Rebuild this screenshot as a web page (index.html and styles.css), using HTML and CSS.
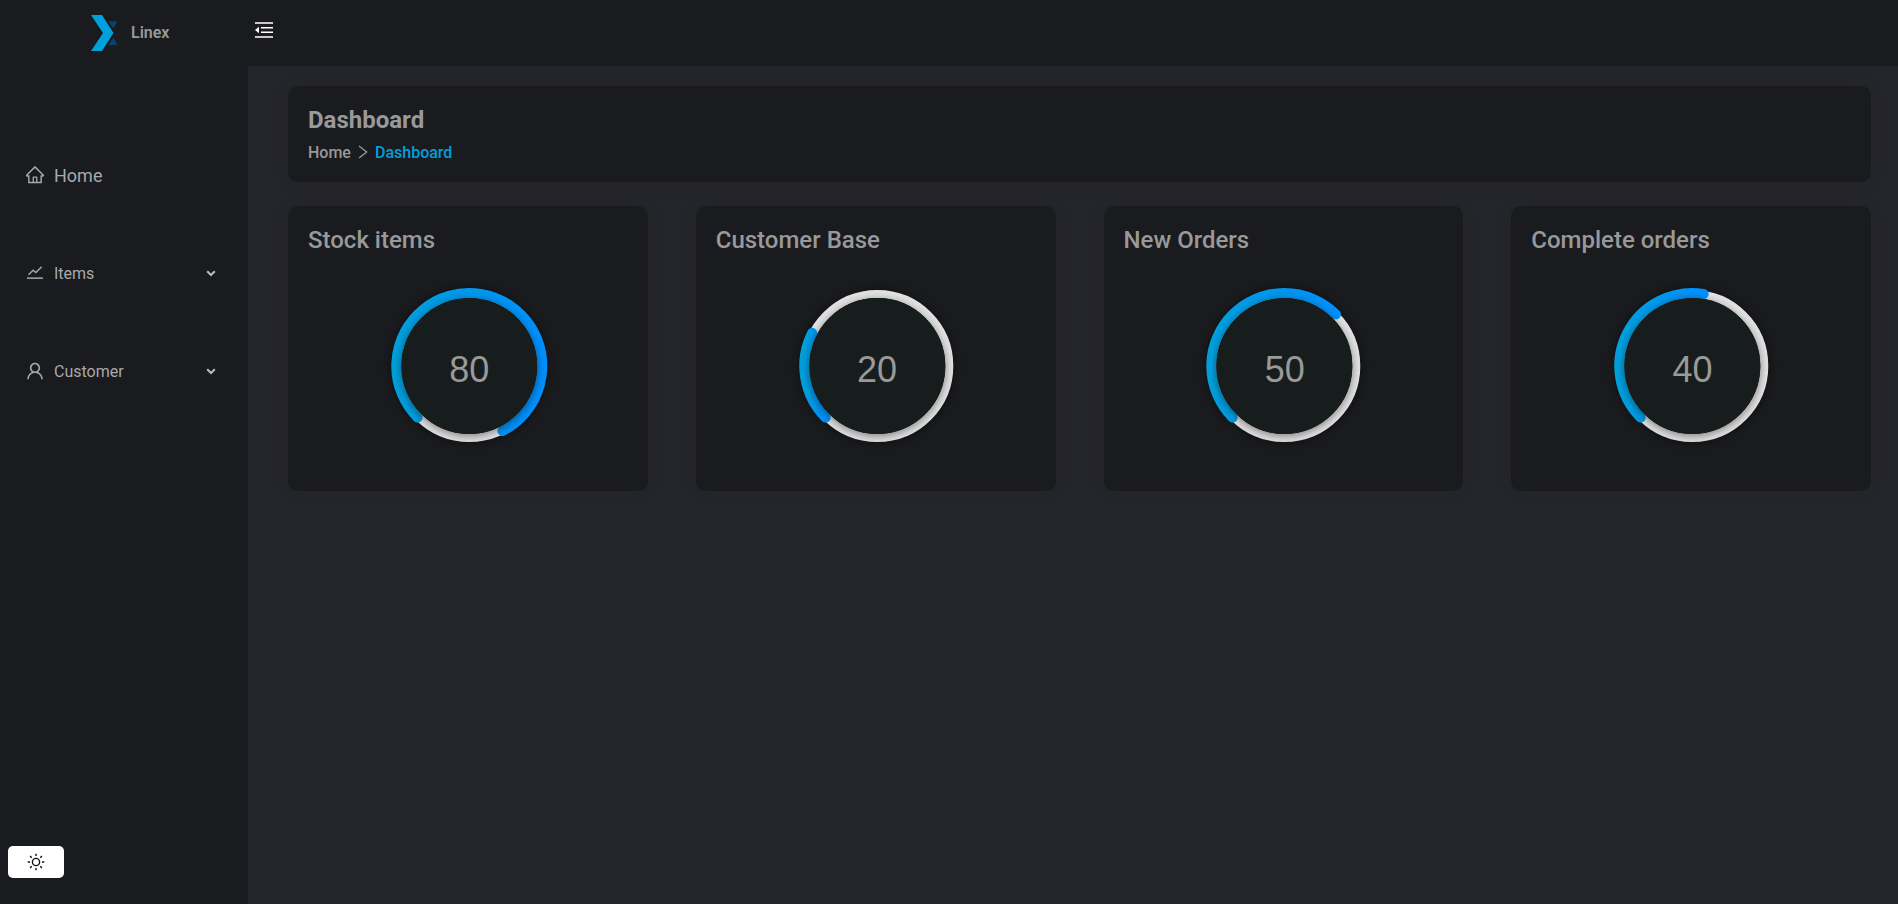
FILE: index.html
```html
<!DOCTYPE html>
<html lang="en">
<head>
<meta charset="utf-8">
<title>Linex</title>
<link rel="stylesheet" href="styles.css">
</head>
<body>
<div class="app">
  <aside class="sidebar">
    <div class="brand">
      <svg width="28" height="36" viewBox="0 0 28 36"><path d="M17 6.200h9.500l-4 7.500zM17 30h9.500l-4-7.500z" fill="#0b426b"/><path d="M0 0H11L22.500 18L11 36H0L12 18z" fill="#00a0dc"/></svg>
      <span>Linex</span>
    </div>
    <nav class="nav">
      <a class="item home">
        <svg class="icon" viewBox="60 75 904 904"><path d="M946.500 505L560.100 118.800l-25.900-25.900a31.500 31.500 0 0 0-44.400 0L77.500 505a63.900 63.900 0 0 0-18.800 46c.4 35.200 29.700 63.300 64.900 63.300h42.500V940h691.800V614.300h43.400c17.100 0 33.200-6.700 45.300-18.800a63.600 63.600 0 0 0 18.700-45.300c0-17-6.700-33.100-18.800-45.200zM568 868H456V664h112v204zm217.900-325.700V868H632V640c0-22.100-17.900-40-40-40H432c-22.100 0-40 17.900-40 40v228H238.100V542.300h-96l370-369.700 23.100 23.100L882 542.300h-96.100z"/></svg>
        <span>Home</span>
      </a>
      <a class="item">
        <svg class="icon" viewBox="0 0 18 18"><path d="M2.500 10.800L7.200 6.200L9.900 8.600L15.700 2.700" fill="none" stroke="currentColor" stroke-width="1.400"/><path d="M1 13.400H17V14.900H1z"/></svg>
        <span>Items</span>
        <svg class="caret" width="10" height="7" viewBox="0 0 10 7"><path d="M1.200 1.200L5 5L8.800 1.200"/></svg>
      </a>
      <a class="item">
        <svg class="icon" viewBox="76 76 872 872"><path d="M858.500 763.600a374 374 0 0 0-80.600-119.500 375.630 375.630 0 0 0-119.500-80.600c-.4-.2-.8-.3-1.200-.5C719.500 518 760 444.700 760 362c0-137-111-248-248-248S264 225 264 362c0 82.700 40.500 156 102.800 201.100-.4.200-.8.300-1.200.5-44.800 18.900-85 46-119.500 80.600a375.630 375.630 0 0 0-80.600 119.500A371.700 371.700 0 0 0 136 901.800a8 8 0 0 0 8 8.200h60c4.400 0 7.900-3.500 8-7.800 2-77.200 33-149.500 87.800-204.300 56.700-56.700 132-87.900 212.200-87.900s155.500 31.200 212.200 87.900C779 752.700 810 825 812 902.200c.1 4.400 3.600 7.800 8 7.800h60a8 8 0 0 0 8-8.200c-1-47.800-10.900-94.300-29.500-138.200zM512 534c-45.900 0-89.100-17.900-121.600-50.400S340 407.900 340 362c0-45.900 17.900-89.100 50.400-121.600S466.100 190 512 190s89.100 17.900 121.600 50.400S684 316.100 684 362c0 45.900-17.900 89.100-50.400 121.600S557.900 534 512 534z"/></svg>
        <span>Customer</span>
        <svg class="caret" width="10" height="7" viewBox="0 0 10 7"><path d="M1.200 1.200L5 5L8.800 1.200"/></svg>
      </a>
    </nav>
    <button class="theme">
      <svg width="18" height="18" viewBox="0 0 18 18" fill="none" stroke="#111" stroke-width="1.400"><circle cx="9" cy="9" r="3.600"/><path d="M9 .8V3M9 15V17.200M.8 9H3M15 9H17.200M3.100 3.100L4.700 4.700M13.300 13.300L14.900 14.900M3.100 14.900L4.700 13.300M13.300 4.700L14.900 3.100"/></svg>
    </button>
  </aside>
  <header class="topbar">
    <svg width="18" height="16" viewBox="0 0 18 16"><path d="M0 0H18V2H0zM0 14H18V16H0z" fill="#c8c8c9"/><path d="M6 5H18V6.500H6zM6 9.500H18V11H6z" fill="#fff"/><path d="M0 8L4 4.800V11.200z" fill="#fff"/></svg>
  </header>
  <main class="content">
    <section class="panel banner">
      <h1>Dashboard</h1>
      <div class="crumbs"><span>Home</span><svg width="10" height="14" viewBox="0 0 10 14"><path d="M1 1L8.700 7L1 13" fill="none" stroke="currentColor" stroke-width="1.300"/></svg><span class="current">Dashboard</span></div>
    </section>
    <section class="cards">
      <article class="panel card"><h2>Stock items</h2>
        <div class="dial"><svg viewBox="-80 -80 160 160"><circle class="track" r="72"/><path class="arc" d="M-51.620 51.620A73 73 0 1 1 33.140 65.040"/></svg><div class="face">80</div></div></article>
      <article class="panel card"><h2>Customer Base</h2>
        <div class="dial"><svg viewBox="-80 -80 160 160"><circle class="track" r="72"/><path class="arc" d="M-51.620 51.620A73 73 0 0 1 -65.040 -33.140"/></svg><div class="face">20</div></div></article>
      <article class="panel card"><h2>New Orders</h2>
        <div class="dial"><svg viewBox="-80 -80 160 160"><circle class="track" r="72"/><path class="arc" d="M-51.620 51.620A73 73 0 0 1 51.620 -51.620"/></svg><div class="face">50</div></div></article>
      <article class="panel card"><h2>Complete orders</h2>
        <div class="dial"><svg viewBox="-80 -80 160 160"><defs><linearGradient id="blue"><stop offset="0" stop-color="#00a0dc"/><stop offset="1" stop-color="#0090ff"/></linearGradient></defs><circle class="track" r="72"/><path class="arc" d="M-51.620 51.620A73 73 0 0 1 11.420 -72.100"/></svg><div class="face">40</div></div></article>
    </section>
  </main>
</div>
</body>
</html>
```
FILE: styles.css
```css
* { box-sizing: border-box; }
body { margin: 0; background: #25262b; color: #999; font-family: Roboto, sans-serif; }
.app { display: grid; grid-template: 66px 1fr / 248px 1fr; height: 100vh; overflow: hidden; }
.sidebar { grid-row: 1 / 3; display: flex; flex-direction: column; background: #1a1b1e; }
.brand { display: flex; align-items: center; gap: 12px; height: 66px; padding-left: 91px; font-size: 16px; font-weight: 600; }
.brand svg { flex: none; margin-top: -1px; }
.brand span { margin-top: -1px; }
.nav { display: flex; flex-direction: column; padding: 60px 32px 0 26px; color: #a9a9aa; }
.item { display: flex; align-items: center; height: 98px; gap: 10px; font-size: 16px; }
.home { font-size: 18px; }
.icon { width: 18px; height: 18px; fill: currentColor; flex: none; }
.caret { margin-left: auto; fill: none; stroke: #bbb; stroke-width: 2; }
.theme { display: flex; align-items: center; justify-content: center; width: 56px; height: 32px; margin: auto 0 26px 8px; padding: 0; border: 0; border-radius: 5px; background: #fff; }
.topbar { padding: 22px 0 0 7px; background: #1a1b1e; }
.topbar svg { display: block; }
.content { padding: 20px 27px 0 40px; }
.panel { background: #1a1b1e; border-radius: 10px; box-shadow: 0 0 20px rgba(25, 10, 20, .1); }
.banner { height: 96px; padding: 20px; }
h1, h2 { margin: 0; font-size: 24px; line-height: 28px; }
h1 { font-weight: 700; }
h2 { font-weight: 500; }
.crumbs { display: flex; align-items: center; height: 20px; margin-top: 8px; font-size: 16px; font-weight: 500; }
.crumbs svg { margin: 0 7px; }
.current { color: #00a0dc; }
.cards { display: grid; grid-template-columns: repeat(4, 1fr); gap: 48px; margin-top: 24px; }
.card { height: 285px; padding: 20px; }
.dial { display: grid; place-items: center; width: 160px; height: 160px; margin: 32px auto 0; transform: translateX(1.3px); }
.dial svg, .face { grid-area: 1 / 1; }
.dial svg { width: 160px; height: 160px; overflow: visible; filter: drop-shadow(0 0 5px rgba(0, 0, 0, .45)); }
.track { fill: none; stroke: #e2e2e2; stroke-width: 8; }
.arc { fill: none; stroke: url(#blue); stroke-width: 10; stroke-linecap: round; }
.face { z-index: 1; width: 136px; height: 136px; border-radius: 50%; background: #171d1c; box-shadow: 0 2px 8px rgba(0, 0, 0, .45); padding-top: 4px; text-align: center; font: 36px/136px "Liberation Sans", Arial, sans-serif; }
```
